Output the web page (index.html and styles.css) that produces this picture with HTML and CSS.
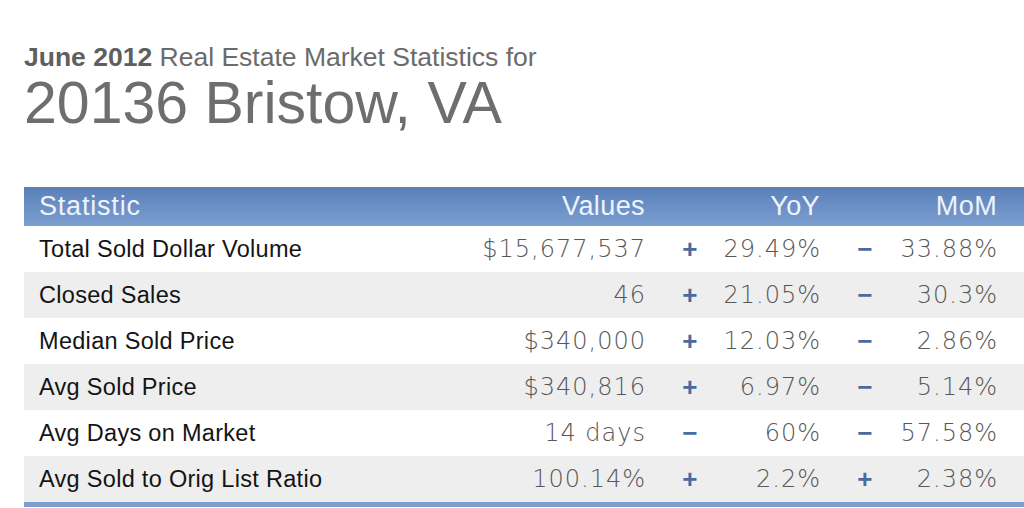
FILE: index.html
```html
<!DOCTYPE html>
<html>
<head>
<meta charset="utf-8">
<link rel="stylesheet" href="styles.css">
</head>
<body>
<div class="page">
  <div class="kicker"><b>June 2012</b> Real Estate Market Statistics for</div>
  <h1 class="title">20136 Bristow, VA</h1>
  <table class="stats">
    <colgroup>
      <col class="c-stat"><col class="c-val"><col class="c-sign"><col class="c-pct"><col class="c-sign"><col class="c-pct2">
    </colgroup>
    <thead>
      <tr>
        <th class="lbl">Statistic</th>
        <th class="num">Values</th>
        <th class="num" colspan="2">YoY</th>
        <th class="num last" colspan="2">MoM</th>
      </tr>
    </thead>
    <tbody>
      <tr><td class="lbl">Total Sold Dollar Volume</td><td class="num">$15,677,537</td><td class="sign">+</td><td class="num">29.49%</td><td class="sign">&minus;</td><td class="num last">33.88%</td></tr>
      <tr><td class="lbl">Closed Sales</td><td class="num">46</td><td class="sign">+</td><td class="num">21.05%</td><td class="sign">&minus;</td><td class="num last">30.3%</td></tr>
      <tr><td class="lbl">Median Sold Price</td><td class="num">$340,000</td><td class="sign">+</td><td class="num">12.03%</td><td class="sign">&minus;</td><td class="num last">2.86%</td></tr>
      <tr><td class="lbl">Avg Sold Price</td><td class="num">$340,816</td><td class="sign">+</td><td class="num">6.97%</td><td class="sign">&minus;</td><td class="num last">5.14%</td></tr>
      <tr><td class="lbl">Avg Days on Market</td><td class="num">14 days</td><td class="sign">&minus;</td><td class="num">60%</td><td class="sign">&minus;</td><td class="num last">57.58%</td></tr>
      <tr><td class="lbl">Avg Sold to Orig List Ratio</td><td class="num">100.14%</td><td class="sign">+</td><td class="num">2.2%</td><td class="sign">+</td><td class="num last">2.38%</td></tr>
    </tbody>
  </table>
</div>
</body>
</html>
```

FILE: styles.css
```css
html, body {
  margin: 0;
  padding: 0;
  background: #ffffff;
  overflow: hidden;
}
.page {
  padding: 42px 0 0 24px;
  font-family: "Liberation Sans", Arial, sans-serif;
}
.kicker {
  font-size: 26.5px;
  line-height: 30px;
  color: #6b6b6b;
}
.kicker b {
  color: #5f5f5f;
}
.title {
  margin: 2px 0 0 0;
  font-size: 59px;
  line-height: 59px;
  font-weight: normal;
  color: #6e6e6e;
}
.stats {
  margin-top: 54px;
  width: 1000px;
  table-layout: fixed;
  border-collapse: collapse;
  border-bottom: 5px solid #7b9ccd;
}
.c-stat { width: 436px; }
.c-val { width: 200px; }
.c-sign { width: 60px; }
.c-pct { width: 115px; }
.c-pct2 { width: 129px; }
.stats th {
  height: 39px;
  padding: 0 15px;
  font-size: 27px;
  font-weight: normal;
  letter-spacing: 0.8px;
  color: #eef3fb;
  background: linear-gradient(#5a80b9, #7c9fd1);
}
.stats th.num {
  letter-spacing: 0.4px;
}
.stats td {
  height: 46px;
  padding: 0 15px;
  font-size: 23.5px;
  letter-spacing: 0.3px;
  color: #5e5e5e;
}
.stats tbody tr:nth-child(even) td {
  background: #eeeeee;
}
.stats .lbl {
  text-align: left;
}
.stats td.lbl {
  color: #141414;
}
.stats .num {
  text-align: right;
  white-space: nowrap;
}
.stats td.num {
  padding-left: 0;
  padding-right: 14px;
  font-family: "DejaVu Sans", "Liberation Sans", sans-serif;
  font-weight: 200;
  font-size: 24px;
  letter-spacing: 1px;
  color: #575757;
}
.stats th.last {
  padding-right: 27px;
}
.stats td.num.last {
  padding-right: 26px;
}
.stats td.sign {
  padding: 0;
  text-align: center;
  font-weight: bold;
  font-size: 26px;
  color: #4a6b9d;
}
```
